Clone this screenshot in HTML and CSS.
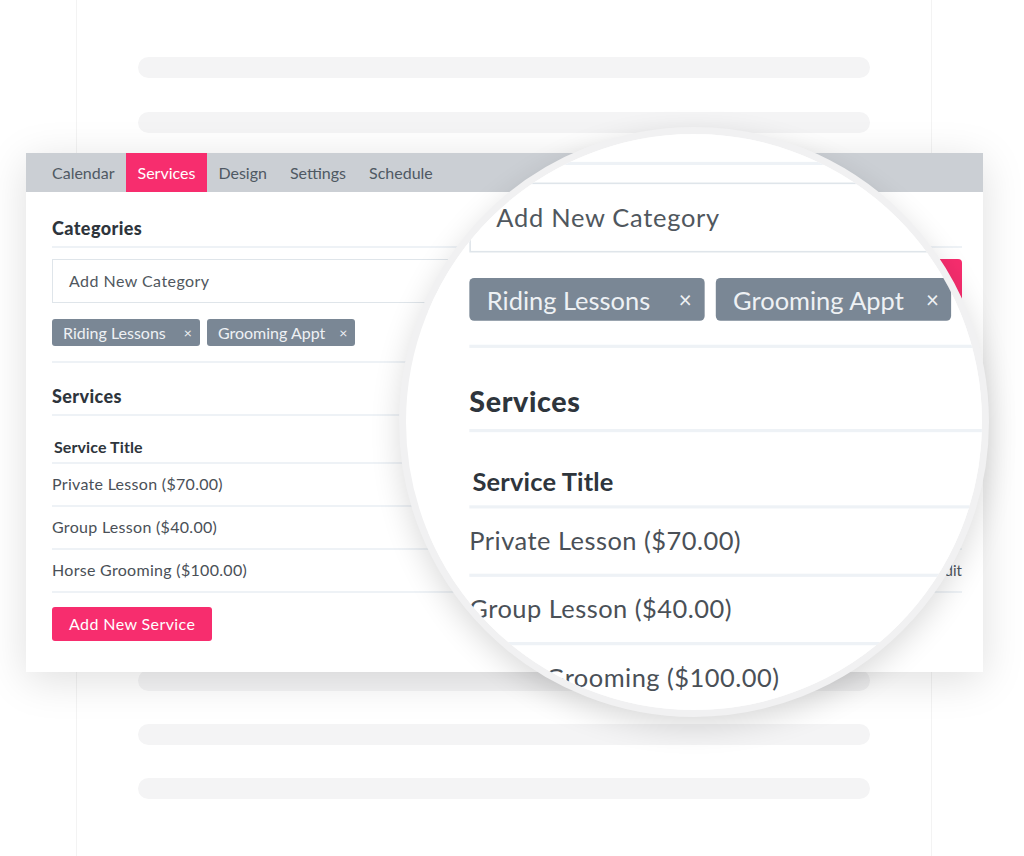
FILE: index.html
```html
<!DOCTYPE html>
<html>
<head>
<meta charset="utf-8">
<link rel="stylesheet" href="styles.css">
</head>
<body>
<div class="stage">
  <div class="page">
    <div class="bars">
      <div class="bar"></div>
      <div class="bar"></div>
    </div>
    <div class="bars bars-low">
      <div class="bar"></div>
      <div class="bar"></div>
      <div class="bar"></div>
    </div>
  </div>

  <div class="card card-main">
    <div class="tabs">
      <div class="tab">Calendar</div>
      <div class="tab active">Services</div>
      <div class="tab">Design</div>
      <div class="tab">Settings</div>
      <div class="tab">Schedule</div>
    </div>
    <div class="content">
      <div class="section-title">Categories</div>
      <div class="input-row">
        <div class="input">Add New Category</div>
        <div class="add-btn"></div>
      </div>
      <div class="tags">
        <div class="tag"><span>Riding Lessons</span><span class="x">×</span></div>
        <div class="tag tag2"><span>Grooming Appt</span><span class="x">×</span></div>
      </div>
      <div class="section-title">Services</div>
      <div class="row head"><span>Service Title</span></div>
      <div class="row"><span>Private Lesson ($70.00)</span></div>
      <div class="row"><span>Group Lesson ($40.00)</span></div>
      <div class="row"><span>Horse Grooming ($100.00)</span><span class="edit">Edit</span></div>
      <div class="btn">Add New Service</div>
    </div>
  </div>

  <div class="lens">
    <div class="lens-inner">
      <div class="card card-clone">
        <div class="tabs tabs-blank"></div>
        <div class="content">
          <div class="section-title spacer"></div>
          <div class="input-row">
            <div class="input">Add New Category</div>
            <div class="add-btn"></div>
          </div>
          <div class="tags">
            <div class="tag"><span>Riding Lessons</span><span class="x">×</span></div>
            <div class="tag tag2"><span>Grooming Appt</span><span class="x">×</span></div>
          </div>
          <div class="section-title">Services</div>
          <div class="row head"><span>Service Title</span></div>
          <div class="row"><span>Private Lesson ($70.00)</span></div>
          <div class="row"><span>Group Lesson ($40.00)</span></div>
          <div class="row"><span>Horse Grooming ($100.00)</span></div>
        </div>
      </div>
    </div>
  </div>
</div>
</body>
</html>
```

FILE: styles.css
```css
* { box-sizing: border-box; }
html, body { margin: 0; padding: 0; background: #fff; }
body { font-family: "Lato", "Open Sans", sans-serif; }

.stage {
  position: relative;
  width: 1024px;
  height: 856px;
  overflow: hidden;
}

.page {
  margin-left: 76px;
  width: 856px;
  height: 856px;
  border-left: 1px solid #f3f3f3;
  border-right: 1px solid #f3f3f3;
  padding: 57px 61px 0;
}

.bars { display: flex; flex-direction: column; gap: 34px; }
.bars-low { margin-top: 537px; gap: 33px; }
.bar {
  height: 21px;
  border-radius: 11px;
  background: #f4f4f5;
}

.card {
  width: 957px;
  height: 519px;
  background: #fff;
}
.card-main {
  position: absolute;
  left: 26px;
  top: 153px;
  box-shadow: 0 8px 40px rgba(0, 0, 0, 0.13);
}

.tabs {
  display: flex;
  height: 39px;
  background: #cbcfd4;
  padding-left: 14.5px;
}
.tabs-blank { background: #fff; }
.tab {
  padding: 0 11.5px;
  line-height: 39px;
  font-size: 16px;
  color: #4f5963;
}
.tab.active { background: #f72d6e; color: #fff; }

.content { padding: 0 21px 0 26px; }

.section-title {
  margin-top: 25px;
  font-size: 18px;
  font-weight: 900;
  line-height: 22px;
  letter-spacing: 0.4px;
  color: #2e353c;
  padding-bottom: 7px;
  border-bottom: 2px solid #eef2f6;
}
.spacer { height: 31px; }

.input-row { display: flex; margin-top: 11px; height: 44px; }
.input {
  flex: 1;
  border: 1px solid #dfe5ea;
  padding-left: 16px;
  line-height: 42px;
  font-size: 16px;
  letter-spacing: 0.45px;
  color: #50575e;
}
.add-btn {
  width: 78px;
  background: #f72d6e;
  border-radius: 0 4px 4px 0;
}

.tags {
  display: flex;
  gap: 7px;
  margin-top: 16px;
  padding-bottom: 15px;
  border-bottom: 2px solid #eef2f6;
}
.tag {
  display: flex;
  align-items: center;
  height: 27px;
  padding: 0 8px 0 11px;
  border-radius: 3px;
  background: #7a8795;
  color: #eef1f4;
  font-size: 16px;
}
.tag .x { margin-left: 18px; font-size: 14px; }
.tag2 .x { margin-left: 14px; }

.tags + .section-title { margin-top: 22px; }

.row {
  display: flex;
  justify-content: space-between;
  padding: 10px 0 11px;
  line-height: 20px;
  font-size: 16px;
  letter-spacing: 0.3px;
  color: #4a5057;
  border-bottom: 2px solid #eef2f6;
}
.row.head {
  padding: 21px 0 5px 2px;
  font-weight: 700;
  letter-spacing: 0.1px;
  color: #2e353c;
}
.edit { color: #50575e; font-size: 15px; letter-spacing: 0; }

.btn {
  display: inline-block;
  margin-top: 14px;
  height: 34px;
  padding: 0 17px;
  line-height: 34px;
  border-radius: 3px;
  background: #f72d6e;
  color: #fff;
  font-size: 16px;
  letter-spacing: 0.4px;
}

.lens {
  position: absolute;
  left: 399px;
  top: 127px;
  width: 590px;
  height: 590px;
  border-radius: 50%;
  border: 7px solid #f1f1f2;
  background: #fff;
  overflow: hidden;
  box-shadow: 0 10px 30px rgba(0, 0, 0, 0.14);
}
.lens-inner {
  position: absolute;
  left: 22px;
  top: -120px;
  transform: scale(1.59);
  transform-origin: 0 0;
}
```
